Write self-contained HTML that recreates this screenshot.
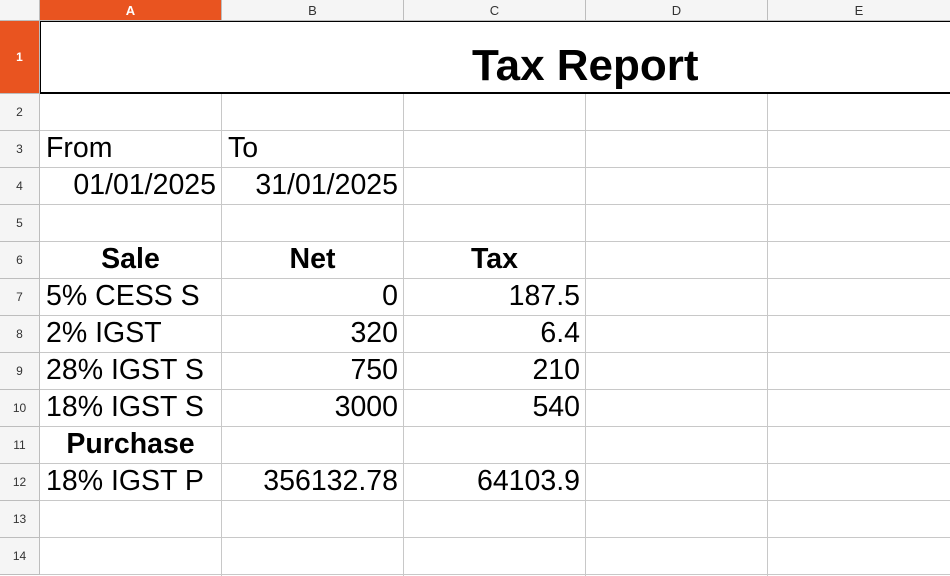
<!DOCTYPE html>
<html><head><meta charset="utf-8"><style>
*{margin:0;padding:0;box-sizing:border-box}
body{width:950px;height:576px;overflow:hidden;background:#fff;font-family:"Liberation Sans",Arial,sans-serif;position:relative}
.a{position:absolute}
.ch{top:0;height:21px;background:#f5f5f5;border-right:1px solid #bdbdbd;border-bottom:1px solid #bdbdbd;font-size:13px;color:#333;text-align:center;line-height:21px}
.rh{left:0;width:40px;background:#f5f5f5;border-bottom:1px solid #bdbdbd;border-right:1px solid #bdbdbd;font-size:12px;color:#333;text-align:center}
.hl{left:40px;width:910px;height:1px;background:#c8c8c8}
.vl{top:94px;width:1px;height:482px;background:#c8c8c8}
.t{font-size:28.5px;color:#000;line-height:37px;height:37px;white-space:nowrap;margin-top:1px}
.b{font-weight:bold}
.r{text-align:right}
.c{text-align:center}
</style></head><body>
<div class="a ch" style="left:0;width:40px"></div>
<div class="a ch" style="left:40px;width:182px;background:#e95420;color:#fff;font-weight:bold">A</div>
<div class="a ch" style="left:222px;width:182px">B</div>
<div class="a ch" style="left:404px;width:182px">C</div>
<div class="a ch" style="left:586px;width:182px">D</div>
<div class="a ch" style="left:768px;width:182px;border-right:none">E</div>

<div class="a rh" style="top:21px;height:73px;line-height:73px;background:#e95420;color:#fff;font-weight:bold">1</div>
<div class="a rh" style="top:94px;height:37px;line-height:37px">2</div>
<div class="a rh" style="top:131px;height:37px;line-height:37px">3</div>
<div class="a rh" style="top:168px;height:37px;line-height:37px">4</div>
<div class="a rh" style="top:205px;height:37px;line-height:37px">5</div>
<div class="a rh" style="top:242px;height:37px;line-height:37px">6</div>
<div class="a rh" style="top:279px;height:37px;line-height:37px">7</div>
<div class="a rh" style="top:316px;height:37px;line-height:37px">8</div>
<div class="a rh" style="top:353px;height:37px;line-height:37px">9</div>
<div class="a rh" style="top:390px;height:37px;line-height:37px">10</div>
<div class="a rh" style="top:427px;height:37px;line-height:37px">11</div>
<div class="a rh" style="top:464px;height:37px;line-height:37px">12</div>
<div class="a rh" style="top:501px;height:37px;line-height:37px">13</div>
<div class="a rh" style="top:538px;height:37px;line-height:37px">14</div>

<div class="a vl" style="left:221px"></div>
<div class="a vl" style="left:403px"></div>
<div class="a vl" style="left:585px"></div>
<div class="a vl" style="left:767px"></div>
<div class="a hl" style="top:130px"></div>
<div class="a hl" style="top:167px"></div>
<div class="a hl" style="top:204px"></div>
<div class="a hl" style="top:241px"></div>
<div class="a hl" style="top:278px"></div>
<div class="a hl" style="top:315px"></div>
<div class="a hl" style="top:352px"></div>
<div class="a hl" style="top:389px"></div>
<div class="a hl" style="top:426px"></div>
<div class="a hl" style="top:463px"></div>
<div class="a hl" style="top:500px"></div>
<div class="a hl" style="top:537px"></div>
<div class="a hl" style="top:574px"></div>

<div class="a" style="left:40px;top:21px;width:910px;height:73px;border-top:1px solid #000;border-left:1px solid #000;border-bottom:2px solid #000"></div>
<div class="a b" style="left:472px;top:39px;font-size:44px;line-height:54px">Tax Report</div>

<div class="a t" style="left:46px;top:129px">From</div>
<div class="a t" style="left:228px;top:129px">To</div>
<div class="a t r" style="left:40px;width:176px;top:166px">01/01/2025</div>
<div class="a t r" style="left:222px;width:176px;top:166px">31/01/2025</div>

<div class="a t b c" style="left:40px;width:181px;top:240px">Sale</div>
<div class="a t b c" style="left:222px;width:181px;top:240px">Net</div>
<div class="a t b c" style="left:404px;width:181px;top:240px">Tax</div>

<div class="a t" style="left:46px;top:277px">5% CESS S</div>
<div class="a t r" style="left:222px;width:176px;top:277px">0</div>
<div class="a t r" style="left:404px;width:176px;top:277px">187.5</div>

<div class="a t" style="left:46px;top:314px">2% IGST</div>
<div class="a t r" style="left:222px;width:176px;top:314px">320</div>
<div class="a t r" style="left:404px;width:176px;top:314px">6.4</div>

<div class="a t" style="left:46px;top:351px">28% IGST S</div>
<div class="a t r" style="left:222px;width:176px;top:351px">750</div>
<div class="a t r" style="left:404px;width:176px;top:351px">210</div>

<div class="a t" style="left:46px;top:388px">18% IGST S</div>
<div class="a t r" style="left:222px;width:176px;top:388px">3000</div>
<div class="a t r" style="left:404px;width:176px;top:388px">540</div>

<div class="a t b c" style="left:40px;width:181px;top:425px">Purchase</div>

<div class="a t" style="left:46px;top:462px">18% IGST P</div>
<div class="a t r" style="left:222px;width:176px;top:462px">356132.78</div>
<div class="a t r" style="left:404px;width:176px;top:462px">64103.9</div>
</body></html>
